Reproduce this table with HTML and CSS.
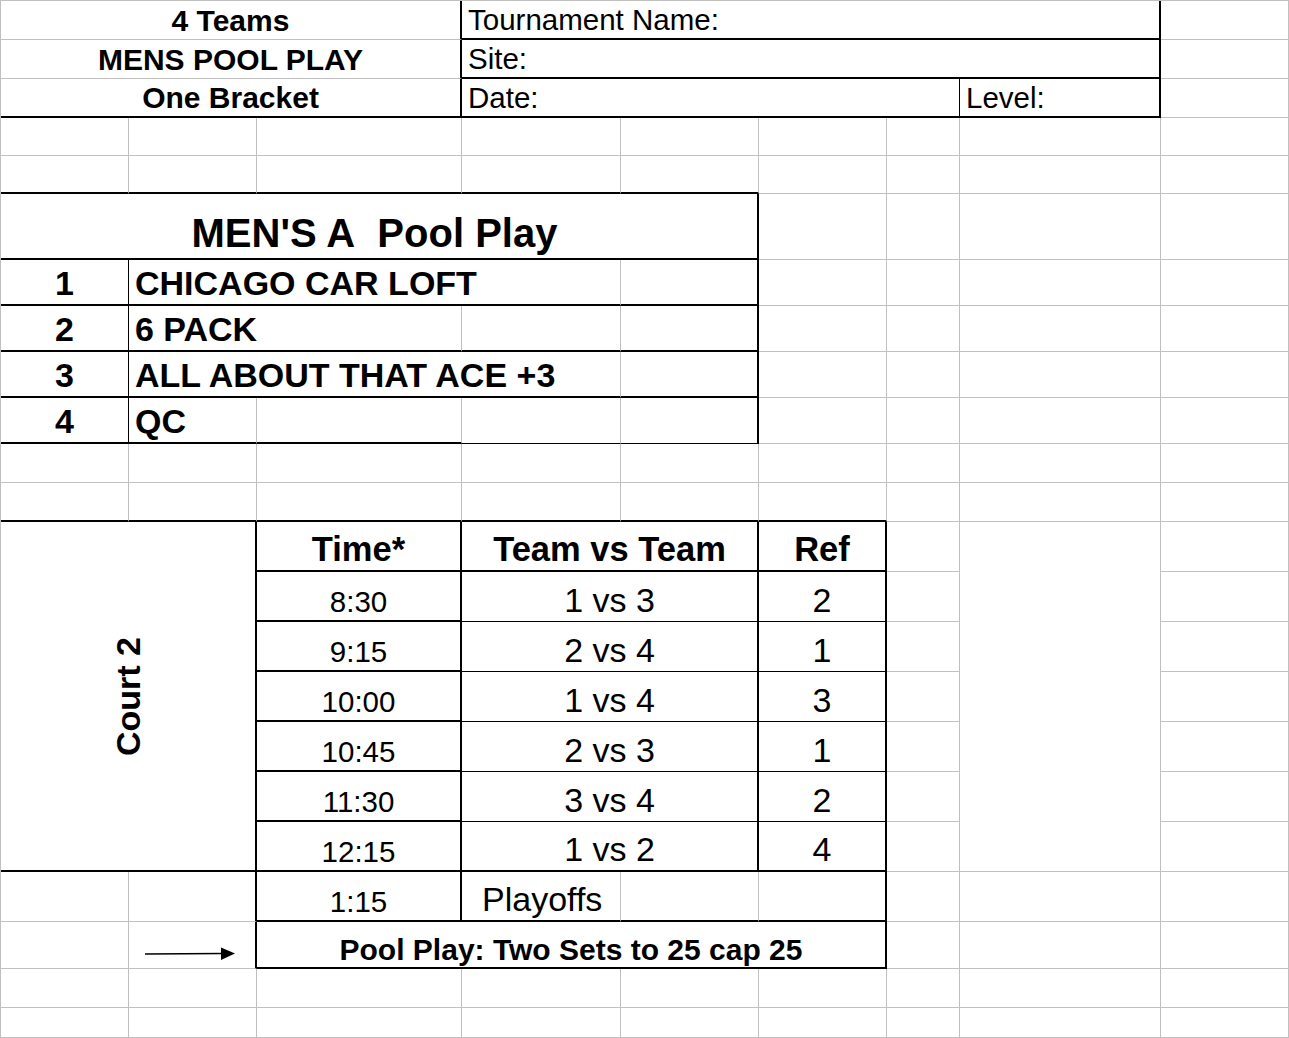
FILE: index.html
```html
<!DOCTYPE html>
<html>
<head>
<meta charset="utf-8">
<title>Mens Pool Play</title>
<link rel="stylesheet" href="styles.css">
</head>
<body>
<div class="sheet">
  <!-- row 1 -->
  <div class="c s3 rK ctr hb">4 Teams</div>
  <div class="c s5 rK bK lft hl">Tournament Name:</div>
  <div class="c"></div>
  <!-- row 2 -->
  <div class="c s3 rK ctr hb">MENS POOL PLAY</div>
  <div class="c s5 rK bK lft hl">Site:</div>
  <div class="c"></div>
  <!-- row 3 -->
  <div class="c s3 rK bK ctr hb">One Bracket</div>
  <div class="c s4 rk bK lft hl">Date:</div>
  <div class="c rK bK lft hl">Level:</div>
  <div class="c"></div>
  <!-- row 4 -->
  <div class="c"></div><div class="c"></div><div class="c"></div><div class="c"></div><div class="c"></div><div class="c"></div><div class="c"></div><div class="c"></div><div class="c"></div>
  <!-- row 5 -->
  <div class="c bK"></div><div class="c bK"></div><div class="c bK"></div><div class="c bK"></div><div class="c bK"></div><div class="c"></div><div class="c"></div><div class="c"></div><div class="c"></div>
  <!-- row 6 -->
  <div class="c s5 rK bK ctr title">MEN'S A&nbsp; Pool Play</div>
  <div class="c"></div><div class="c"></div><div class="c"></div><div class="c"></div>
  <!-- row 7 -->
  <div class="c rk bK ctr team">1</div>
  <div class="c s3 bK lft team">CHICAGO CAR LOFT</div>
  <div class="c rK bK"></div>
  <div class="c"></div><div class="c"></div><div class="c"></div><div class="c"></div>
  <!-- row 8 -->
  <div class="c rk bK ctr team">2</div>
  <div class="c s2 bK lft team">6 PACK</div>
  <div class="c bK"></div>
  <div class="c rK bK"></div>
  <div class="c"></div><div class="c"></div><div class="c"></div><div class="c"></div>
  <!-- row 9 -->
  <div class="c rk bK ctr team">3</div>
  <div class="c s3 bK lft team">ALL ABOUT THAT ACE +3</div>
  <div class="c rK bK"></div>
  <div class="c"></div><div class="c"></div><div class="c"></div><div class="c"></div>
  <!-- row 10 -->
  <div class="c rk bK ctr team">4</div>
  <div class="c bK lft team">QC</div>
  <div class="c bK"></div>
  <div class="c bk"></div>
  <div class="c rK bk"></div>
  <div class="c"></div><div class="c"></div><div class="c"></div><div class="c"></div>
  <!-- row 11 -->
  <div class="c"></div><div class="c"></div><div class="c"></div><div class="c"></div><div class="c"></div><div class="c"></div><div class="c"></div><div class="c"></div><div class="c"></div>
  <!-- row 12 -->
  <div class="c bK"></div><div class="c bK"></div><div class="c bK"></div><div class="c bK"></div><div class="c bK"></div><div class="c bK"></div><div class="c"></div><div class="c"></div><div class="c"></div>
  <!-- row 13: schedule header -->
  <div class="c s2 r7 rK bK court"><span class="vt">Court 2</span></div>
  <div class="c rK bK ctr head">Time*</div>
  <div class="c s2 rK bK ctr head">Team vs Team</div>
  <div class="c rK bK ctr head">Ref</div>
  <div class="c"></div>
  <div class="c r7"></div>
  <div class="c"></div>
  <!-- row 14 -->
  <div class="c rK bK ctr time">8:30</div>
  <div class="c s2 rK bk ctr match">1 vs 3</div>
  <div class="c rK bk ctr match">2</div>
  <div class="c"></div><div class="c"></div>
  <!-- row 15 -->
  <div class="c rK bK ctr time">9:15</div>
  <div class="c s2 rK bk ctr match">2 vs 4</div>
  <div class="c rK bk ctr match">1</div>
  <div class="c"></div><div class="c"></div>
  <!-- row 16 -->
  <div class="c rK bK ctr time">10:00</div>
  <div class="c s2 rK bk ctr match">1 vs 4</div>
  <div class="c rK bk ctr match">3</div>
  <div class="c"></div><div class="c"></div>
  <!-- row 17 -->
  <div class="c rK bK ctr time">10:45</div>
  <div class="c s2 rK bk ctr match">2 vs 3</div>
  <div class="c rK bk ctr match">1</div>
  <div class="c"></div><div class="c"></div>
  <!-- row 18 -->
  <div class="c rK bK ctr time">11:30</div>
  <div class="c s2 rK bk ctr match">3 vs 4</div>
  <div class="c rK bk ctr match">2</div>
  <div class="c"></div><div class="c"></div>
  <!-- row 19 -->
  <div class="c rK bK ctr time">12:15</div>
  <div class="c s2 rK bK ctr match">1 vs 2</div>
  <div class="c rK bK ctr match">4</div>
  <div class="c"></div><div class="c"></div>
  <!-- row 20 -->
  <div class="c"></div>
  <div class="c rK"></div>
  <div class="c rK bK ctr time">1:15</div>
  <div class="c bK playoffs">Playoffs</div>
  <div class="c bK"></div>
  <div class="c rK bK"></div>
  <div class="c"></div><div class="c"></div><div class="c"></div>
  <!-- row 21 -->
  <div class="c"></div>
  <div class="c rK arrowcell">
    <svg class="arrow" width="125" height="46" viewBox="0 0 125 46">
      <line x1="16" y1="32" x2="94" y2="31.5" stroke="#000" stroke-width="1.6"/>
      <polygon points="92,25.5 106,31.5 92,38" fill="#000"/>
    </svg>
  </div>
  <div class="c s4 rK bK ctr rule">Pool Play: Two Sets to 25 cap 25</div>
  <div class="c"></div><div class="c"></div><div class="c"></div>
  <!-- row 22 -->
  <div class="c"></div><div class="c"></div><div class="c"></div><div class="c"></div><div class="c"></div><div class="c"></div><div class="c"></div><div class="c"></div><div class="c"></div>
  <!-- row 23 -->
  <div class="c"></div><div class="c"></div><div class="c"></div><div class="c"></div><div class="c"></div><div class="c"></div><div class="c"></div><div class="c"></div><div class="c"></div>
</div>
</body>
</html>
```

FILE: styles.css
```css
html, body {
  margin: 0;
  padding: 0;
  background: #ffffff;
}

body {
  font-family: "Liberation Sans", Arial, sans-serif;
  color: #000000;
}

.sheet {
  display: grid;
  grid-template-columns: 128px 128px 205px 159px 138px 128px 73px 201px 128px;
  grid-template-rows: 39px 39px 39px 38px 38px 66px 46px 46px 46px 46px 39px 39px repeat(8, 50px) 47px 39px 30px;
  width: max-content;
  border-left: 1px solid #c0c0c0;
  border-top: 1px solid #c0c0c0;
}

.c {
  box-sizing: border-box;
  border-right: 1px solid #c0c0c0;
  border-bottom: 1px solid #c0c0c0;
  display: flex;
  align-items: flex-end;
  white-space: nowrap;
  min-width: 0;
  padding-bottom: 1px;
}

/* spans */
.s2 { grid-column: span 2; }
.s3 { grid-column: span 3; }
.s4 { grid-column: span 4; }
.s5 { grid-column: span 5; }
.r7 { grid-row: span 7; }

/* black borders */
.rk { border-right: 1px solid #000; }
.rK { border-right: 2px solid #000; }
.bk { border-bottom: 1px solid #000; }
.bK { border-bottom: 2px solid #000; }

/* alignment */
.ctr { justify-content: center; }
.lft { justify-content: flex-start; padding-left: 6px; }

/* text styles */
.hb {
  font-weight: bold;
  font-size: 30px;
}

.hl {
  font-size: 29.5px;
  padding-bottom: 1px;
}

.title {
  font-weight: bold;
  font-size: 40px;
  padding-bottom: 2px;
  padding-right: 9px;
}

.team {
  font-weight: bold;
  font-size: 34px;
}

.head {
  font-weight: bold;
  font-size: 34.5px;
}

.time {
  font-size: 29.5px;
}

.match {
  font-size: 34px;
}

.playoffs {
  font-size: 34px;
  padding-left: 20px;
}

.rule {
  font-weight: bold;
  font-size: 30px;
  padding-bottom: 0;
}

.court {
  justify-content: center;
  align-items: center;
  padding-bottom: 0;
}

.vt {
  writing-mode: vertical-rl;
  transform: rotate(180deg);
  font-weight: bold;
  font-size: 34px;
}

.arrowcell {
  align-items: flex-start;
  padding-bottom: 0;
}

.arrow {
  display: block;
}
```
